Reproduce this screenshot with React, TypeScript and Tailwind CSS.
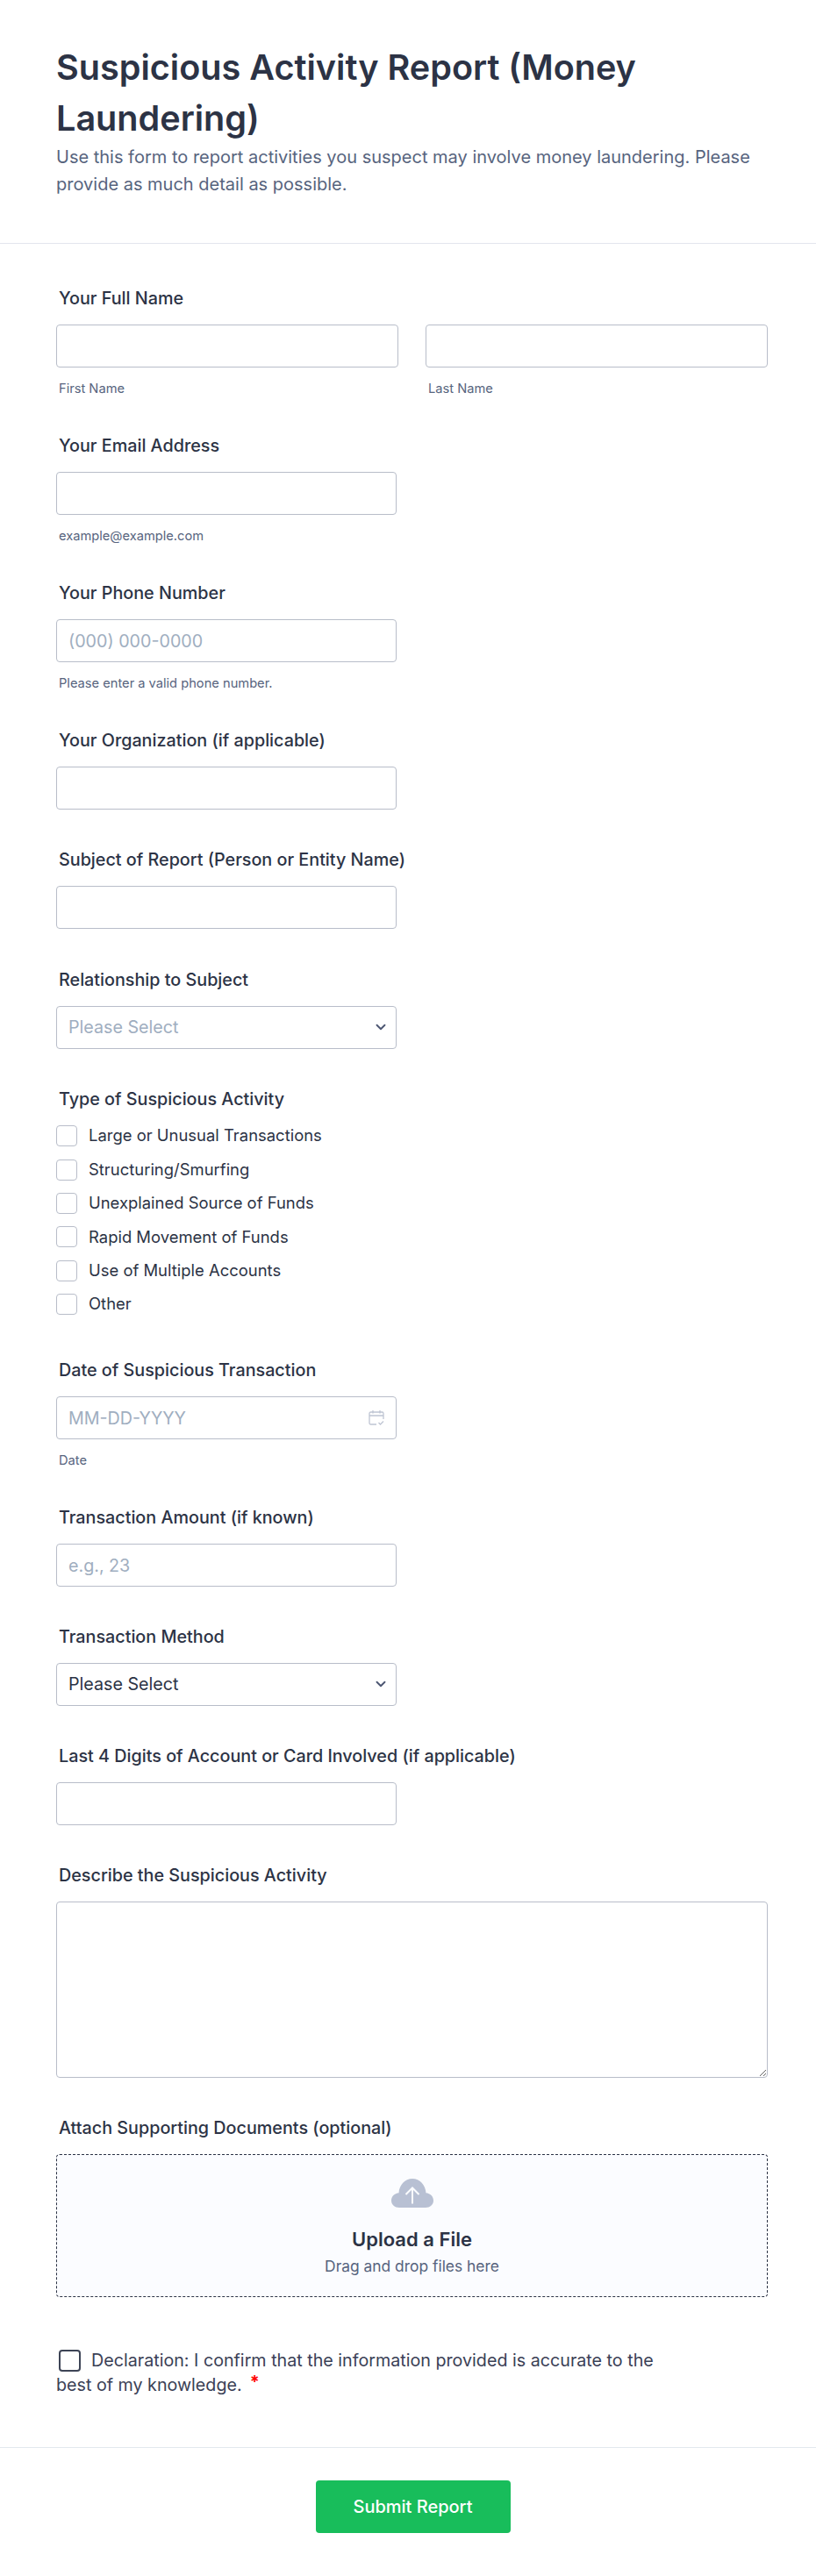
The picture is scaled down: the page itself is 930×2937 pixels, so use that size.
import { ChevronDown } from 'lucide-react';

const inputBase =
  'block h-[49px] rounded-[4px] border border-[#b8bdc9] bg-white px-[13px] text-[19.7px] text-[#2c3345] placeholder:text-[#a0aec0] outline-none';
const inputClass = `${inputBase} w-[388px] mt-[16px]`;

function Label({ children }: { children: React.ReactNode }) {
  return <div className="px-[3px] text-[19.75px] leading-[28px] font-[480] text-[#2c3345]">{children}</div>;
}

function Hint({ children }: { children: React.ReactNode }) {
  return <div className="mt-[14px] px-[3px] text-[14.67px] leading-[20px] text-[#57647e]">{children}</div>;
}

function SelectField({ placeholder }: { placeholder: boolean }) {
  return (
    <div className="relative mt-[16px] w-[388px]">
      <select
        defaultValue="Please Select"
        className={`block h-[49px] w-full appearance-none rounded-[4px] border border-[#b8bdc9] bg-white px-[13px] text-[19.7px] outline-none ${
          placeholder ? 'text-[#a0aec0]' : 'text-[#2c3345]'
        }`}
      >
        <option>Please Select</option>
      </select>
      <ChevronDown className="absolute top-[15px] right-[9px] size-[18px] text-[#4c5672]" strokeWidth={2.5} />
    </div>
  );
}

function CalendarIcon() {
  return (
    <svg className="absolute top-[15px] right-[14px] size-[18px]" viewBox="0 0 18 18" fill="none" stroke="#bfc5d3" strokeWidth="1.3">
      <path d="M9 17H2.500A1.500 1.500 0 0 1 1 15.500V4.500A1.500 1.500 0 0 1 2.500 3h13A1.500 1.500 0 0 1 17 4.500V11" />
      <path d="M1 7h16M5 1v3.500M13 1v3.500" />
      <path d="M11.500 15l2 2 3.500-3.500" />
    </svg>
  );
}

function CloudIcon() {
  return (
    <svg className="h-[33px] w-[48px]" viewBox="0 0 48 33" fill="none">
      <path
        d="M9 33C4 33 0 29.500 0 25 0 20.500 3.500 16.800 8.500 16.300 9 7.500 15.500 0 24 0s15 7.500 15.500 16.300C44.500 16.800 48 20.500 48 25 48 29.500 44 33 39 33H9Z"
        fill="#b8c0d3"
      />
      <path d="M24 28.500V11M16.500 18 24 10.500l7.500 7.500" stroke="#fbfcff" strokeWidth="2" />
    </svg>
  );
}

const activities = [
  'Large or Unusual Transactions',
  'Structuring/Smurfing',
  'Unexplained Source of Funds',
  'Rapid Movement of Funds',
  'Use of Multiple Accounts',
  'Other',
];

export default function App() {
  return (
    <div className="min-h-[2937px] bg-white font-['Inter','Liberation_Sans',sans-serif] [font-optical-sizing:none] text-[#2c3345]">
      <header className="h-[278px] border-b border-[#e3e5ee] px-[64px] pt-[48px]">
        <h1 className="text-[39.6px] leading-[58px] font-semibold">Suspicious Activity Report (Money Laundering)</h1>
        <p className="text-[20px] leading-[31px] text-[#57647e]">
          Use this form to report activities you suspect may involve money laundering. Please provide as much detail as possible.
        </p>
      </header>

      <form className="px-[64px] pt-[48px]">
        <Label>Your Full Name</Label>
        <div className="mt-[16px] flex gap-[31px]">
          <div>
            <input className={`${inputBase} w-[390px]`} />
            <Hint>First Name</Hint>
          </div>
          <div>
            <input className={`${inputBase} w-[390px]`} />
            <Hint>Last Name</Hint>
          </div>
        </div>

        <div className="mt-[41px]">
          <Label>Your Email Address</Label>
          <input className={inputClass} />
          <Hint>example@example.com</Hint>
        </div>

        <div className="mt-[41px]">
          <Label>Your Phone Number</Label>
          <input className={inputClass} placeholder="(000) 000-0000" />
          <Hint>Please enter a valid phone number.</Hint>
        </div>

        <div className="mt-[41px]">
          <Label>Your Organization (if applicable)</Label>
          <input className={inputClass} />
        </div>

        <div className="mt-[43px]">
          <Label>Subject of Report (Person or Entity Name)</Label>
          <input className={inputClass} />
        </div>

        <div className="mt-[44px]">
          <Label>Relationship to Subject</Label>
          <SelectField placeholder />
        </div>

        <div className="mt-[43px]">
          <Label>Type of Suspicious Activity</Label>
          <div className="mt-[16px] flex flex-col gap-[14px]">
            {activities.map((item) => (
              <label key={item} className="flex h-[24.4px] items-center gap-[13px] text-[18.45px] text-[#2c3345]">
                <span className="size-[24px] rounded-[4px] border border-[#b8bdc9] bg-white" />
                {item}
              </label>
            ))}
          </div>
        </div>

        <div className="mt-[49px]">
          <Label>Date of Suspicious Transaction</Label>
          <div className="relative mt-[16px] w-[388px]">
            <input className={`${inputBase} w-full`} placeholder="MM-DD-YYYY" />
            <CalendarIcon />
          </div>
          <Hint>Date</Hint>
        </div>

        <div className="mt-[41px]">
          <Label>Transaction Amount (if known)</Label>
          <input className={inputClass} placeholder="e.g., 23" />
        </div>

        <div className="mt-[43px]">
          <Label>Transaction Method</Label>
          <SelectField placeholder={false} />
        </div>

        <div className="mt-[43px]">
          <Label>Last 4 Digits of Account or Card Involved (if applicable)</Label>
          <input className={inputClass} />
        </div>

        <div className="mt-[43px]">
          <Label>Describe the Suspicious Activity</Label>
          <textarea className="mt-[16px] block h-[201px] w-[811px] rounded-[4px] border border-[#b8bdc9] bg-white outline-none" />
        </div>

        <div className="mt-[43px]">
          <Label>Attach Supporting Documents (optional)</Label>
          <div className="mt-[16px] flex h-[163px] w-[811px] flex-col items-center rounded-[4px] border border-dashed border-[#2c3345] bg-[#fbfcff] pt-[27px]">
            <CloudIcon />
            <div className="mt-[22px] text-[22px] leading-[28px] font-semibold">Upload a File</div>
            <div className="mt-[6px] text-[17.4px] leading-[22px] text-[#57647e]">Drag and drop files here</div>
          </div>
        </div>

        <div className="mt-[58px] w-[700px] text-[19.7px] leading-[28px] text-[#3b4156]">
          <span className="mr-[12px] ml-[3px] inline-block size-[25px] rounded-[4px] border-2 border-[#3d4456] align-[-6px]" />
          Declaration: I confirm that the information provided is accurate to the best of my knowledge.
          <span className="relative -top-[3px] ml-[9px] inline-block text-[19.7px] leading-[14px] font-bold text-[#ff0000]">*</span>
        </div>
      </form>

      <footer className="mt-[57px] flex justify-center border-t border-[#e3e8ee] pt-[37px] pl-[11px]">
        <button className="h-[60px] w-[222px] rounded-[4px] bg-[#18bd5b] text-[20px] font-medium text-white">Submit Report</button>
      </footer>
    </div>
  );
}
